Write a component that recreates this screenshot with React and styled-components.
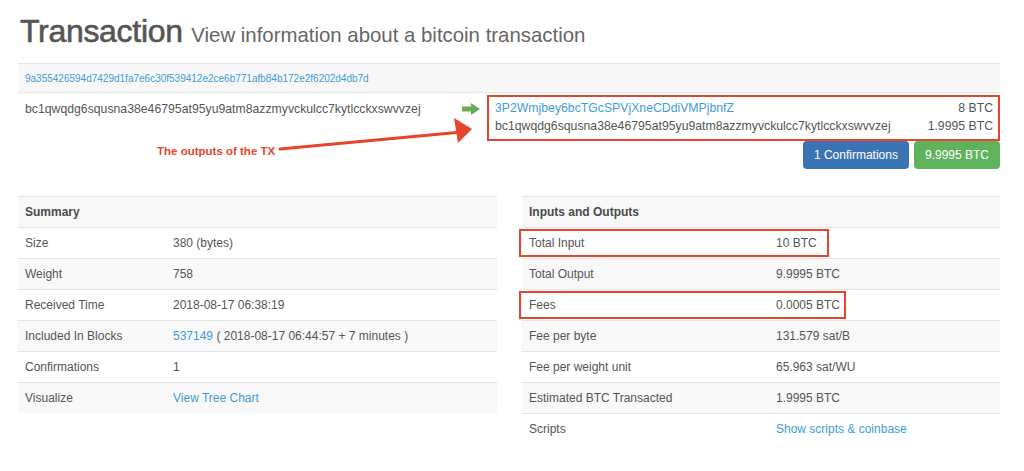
import React from "react";
import styled, { createGlobalStyle } from "styled-components";

const red = "#e5452c";
const link = "#3f9cd8";

const GlobalStyle = createGlobalStyle`
  body {
    margin: 0;
    background: #fff;
    font-family: "Liberation Sans", Arial, sans-serif;
    color: #555;
  }
`;

const Page = styled.div`
  width: 982px;
  padding-left: 18px;
`;

const Header = styled.h1`
  margin: 0 0 14px 2px;
  padding-top: 13px;
  height: 36px;
  font-size: 32px;
  line-height: 36px;
  font-weight: 400;
  color: #555;
  -webkit-text-stroke: 0.6px #555;
  letter-spacing: -0.3px;
`;

const Small = styled.small`
  font-size: 20.4px;
  color: #666;
  -webkit-text-stroke: 0;
  letter-spacing: 0;
`;

const A = styled.a`
  color: ${link};
  text-decoration: none;
`;

const TxBlock = styled.div`
  position: relative;
`;

const HashBar = styled.div`
  height: 28px;
  display: flex;
  align-items: center;
  padding: 0 7px;
  background: #f7f7f7;
  border-top: 1px solid #e6e6e6;
  border-bottom: 1px solid #e6e6e6;
  font-size: 10px;
`;

const TxRow = styled.div`
  display: grid;
  grid-template-columns: 1fr 32px 513px;
  font-size: 12.25px;
  line-height: 18px;
`;

const InputAddr = styled.div`
  padding: 7px 7px 0;
`;

const ArrowCell = styled.div`
  display: flex;
  justify-content: center;
  padding-top: 10px;
`;

const Outputs = styled.div`
  margin-top: 2px;
  border: 2px solid ${red};
  padding: 2px 5px 4px 6px;
`;

const OutRow = styled.div`
  display: flex;
  justify-content: space-between;
`;

const ButtonRow = styled.div`
  display: flex;
  align-items: flex-start;
  gap: 5px;
  height: 28px;
`;

const Note = styled.span`
  margin: 3px auto 0 139px;
  font-size: 11.5px;
  line-height: 14px;
  font-weight: 700;
  color: ${red};
`;

const Btn = styled.button`
  height: 28px;
  padding: 0 11px;
  border: none;
  border-radius: 4px;
  background: ${(p) => p.$bg};
  color: #fff;
  font-family: inherit;
  font-size: 12px;
`;

const NoteArrow = styled.svg`
  position: absolute;
  left: 0;
  top: 0;
  pointer-events: none;
`;

const Tables = styled.div`
  display: grid;
  grid-template-columns: 479px 478px;
  gap: 25px;
  margin-top: 27px;
`;

const Table = styled.div`
  font-size: 12px;
  line-height: 14px;
`;

const Row = styled.div`
  position: relative;
  display: grid;
  grid-template-columns: ${(p) => p.$labelWidth}px 1fr;
  padding: 8px 7px;
  border-top: 1px solid #e4e4e4;
  &:nth-child(odd) {
    background: #f8f8f8;
  }
`;

const HeadCell = styled.span`
  font-weight: 700;
  color: #4a4a4a;
`;

const Mark = styled.span`
  position: absolute;
  left: -3px;
  top: 1px;
  bottom: 1px;
  border: 2px solid ${red};
  pointer-events: none;
`;

const summary = [
  { label: "Size", value: "380 (bytes)" },
  { label: "Weight", value: "758" },
  { label: "Received Time", value: "2018-08-17 06:38:19" },
  {
    label: "Included In Blocks",
    value: (
      <>
        <A href="#">537149</A> ( 2018-08-17 06:44:57 + 7 minutes )
      </>
    ),
  },
  { label: "Confirmations", value: "1" },
  { label: "Visualize", value: <A href="#">View Tree Chart</A> },
];

const io = [
  { label: "Total Input", value: "10 BTC", mark: 306 },
  { label: "Total Output", value: "9.9995 BTC" },
  { label: "Fees", value: "0.0005 BTC", mark: 323 },
  { label: "Fee per byte", value: "131.579 sat/B" },
  { label: "Fee per weight unit", value: "65.963 sat/WU" },
  { label: "Estimated BTC Transacted", value: "1.9995 BTC" },
  { label: "Scripts", value: <A href="#">Show scripts &amp; coinbase</A> },
];

const outputs = [
  { addr: "3P2Wmjbey6bcTGcSPVjXneCDdiVMPjbnfZ", amount: "8 BTC", isLink: true },
  { addr: "bc1qwqdg6squsna38e46795at95yu9atm8azzmyvckulcc7kytlcckxswvvzej", amount: "1.9995 BTC" },
];

function InfoTable({ title, rows, labelWidth }) {
  return (
    <Table>
      <Row $labelWidth={labelWidth}>
        <HeadCell>{title}</HeadCell>
        <span />
      </Row>
      {rows.map((r) => (
        <Row key={r.label} $labelWidth={labelWidth}>
          <span>{r.label}</span>
          <span>{r.value}</span>
          {r.mark && <Mark style={{ width: r.mark }} />}
        </Row>
      ))}
    </Table>
  );
}

export default function App() {
  return (
    <>
      <GlobalStyle />
      <Page>
        <Header>
          Transaction <Small>View information about a bitcoin transaction</Small>
        </Header>
        <TxBlock>
          <HashBar>
            <A href="#">9a355426594d7429d1fa7e6c30f539412e2ce6b771afb84b172e2f6202d4db7d</A>
          </HashBar>
          <TxRow>
            <InputAddr>bc1qwqdg6squsna38e46795at95yu9atm8azzmyvckulcc7kytlcckxswvvzej</InputAddr>
            <ArrowCell>
              <svg width="18" height="12" viewBox="0 0 18 12">
                <path d="M0 3.5h9V0l9 6-9 6V8.5H0z" fill="#6aaa58" />
              </svg>
            </ArrowCell>
            <Outputs>
              {outputs.map((o) => (
                <OutRow key={o.addr}>
                  {o.isLink ? <A href="#">{o.addr}</A> : <span>{o.addr}</span>}
                  <span>{o.amount}</span>
                </OutRow>
              ))}
            </Outputs>
          </TxRow>
          <ButtonRow>
            <Note>The outputs of the TX</Note>
            <Btn $bg="#3a74b2">1 Confirmations</Btn>
            <Btn $bg="#5fb35c">9.9995 BTC</Btn>
          </ButtonRow>
          <NoteArrow width="982" height="120" viewBox="0 0 982 120">
            <path d="M262 86 C330 80 390 74 444 69" stroke={red} strokeWidth="3" fill="none" strokeLinecap="round" />
            <path d="M454 66 L436 55 L440 80 Z" fill={red} />
          </NoteArrow>
        </TxBlock>
        <Tables>
          <InfoTable title="Summary" rows={summary} labelWidth={148} />
          <InfoTable title="Inputs and Outputs" rows={io} labelWidth={247} />
        </Tables>
      </Page>
    </>
  );
}
